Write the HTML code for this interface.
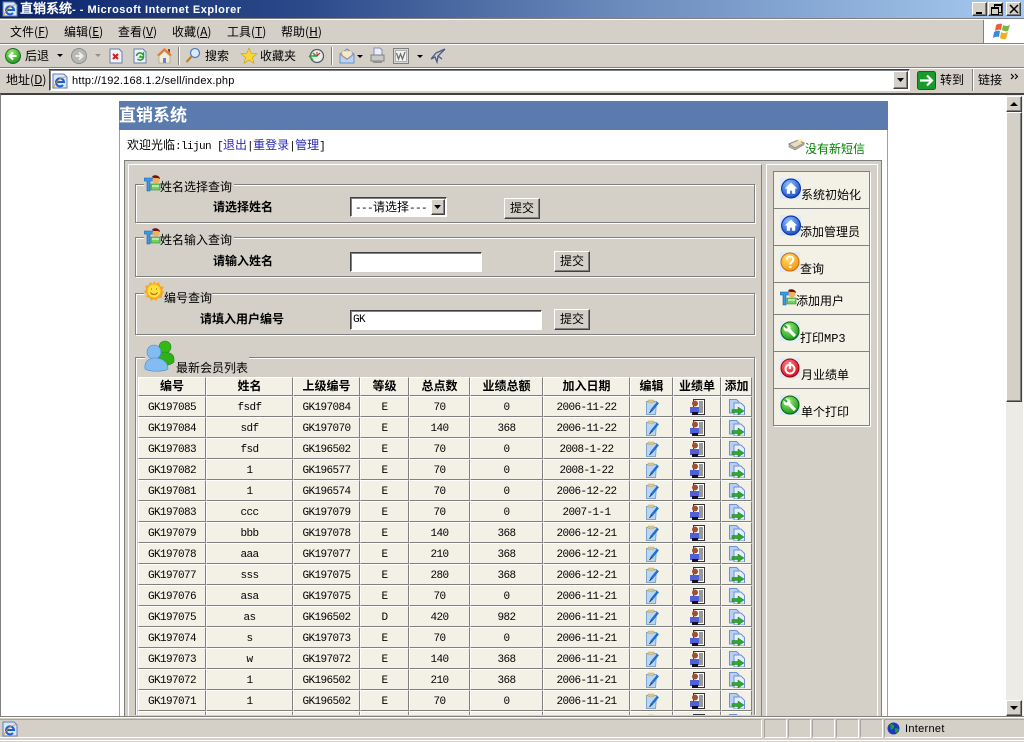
<!DOCTYPE html>
<html><head><meta charset="utf-8"><title>直销系统</title>
<style>
html,body{margin:0;padding:0;width:1024px;height:742px;overflow:hidden;background:#d4d0c8;font-family:"WenQuanYi Zen Hei","Noto Sans CJK SC","Liberation Sans",sans-serif;font-size:12px;color:#000}
.a{position:absolute}
.t{position:absolute;white-space:nowrap;line-height:14px;font-size:12px}
.l{font-family:"Liberation Sans","WenQuanYi Zen Hei",sans-serif;font-size:11px}
.m{font-family:"Liberation Mono","WenQuanYi Zen Hei",monospace;font-size:11px;letter-spacing:-.6px}
.btn3d{position:absolute;background:#d4d0c8;border:1px solid;border-color:#fff #404040 #404040 #fff;box-shadow:inset -1px -1px 0 #808080;box-sizing:border-box}
.sunk{position:absolute;background:#fff;border:1px solid;border-color:#404040 #fff #fff #404040;box-shadow:inset 1px 1px 0 #808080,0 0 0 0 #fff;box-sizing:border-box}
.fs{position:absolute;left:135px;width:620px;box-sizing:border-box;border:1px solid #808080;box-shadow:1px 1px 0 #fff,inset 1px 1px 0 #fff}
.leg{position:absolute;background:#d4d0c8;height:14px}
.st{position:absolute;top:719px;height:19px;box-sizing:border-box;border:1px solid;border-color:#a8a49c #fff #fff #a8a49c}
table{border-collapse:separate;border-spacing:0;table-layout:fixed}
#tb td,#tb th{background:#f3f1e6;border-style:solid;border-width:1px;border-color:#fff #808080 #808080 #fff;padding:0;text-align:center;overflow:hidden;white-space:nowrap;line-height:12px}
#tb td{font-family:"Liberation Mono","WenQuanYi Zen Hei",monospace;font-size:11px;letter-spacing:-.6px;height:17px;padding-top:2px}
#tb th{font-size:12px;font-weight:bold;height:16px;padding-bottom:1px}
#tb svg{display:block;margin:0 auto;position:relative;top:-1px}
svg{position:absolute;overflow:visible}
</style></head><body>
<svg width="0" height="0" style="position:absolute"><defs>
<radialGradient id="gb" cx=".4" cy=".3" r=".8"><stop offset="0" stop-color="#8fc4ff"/><stop offset="1" stop-color="#0b3fc0"/></radialGradient>
<radialGradient id="gg" cx=".4" cy=".3" r=".8"><stop offset="0" stop-color="#9cf070"/><stop offset="1" stop-color="#0a8a14"/></radialGradient>
<radialGradient id="gy" cx=".4" cy=".3" r=".8"><stop offset="0" stop-color="#ffe070"/><stop offset="1" stop-color="#f09000"/></radialGradient>
<radialGradient id="gr" cx=".4" cy=".3" r=".8"><stop offset="0" stop-color="#ff8080"/><stop offset="1" stop-color="#d00010"/></radialGradient>
<symbol id="edit" viewBox="0 0 16 16"><path d="M2.500 2.500h10l-1 13h-9z" fill="#bcd6f2" stroke="#7fa6cc"/><path d="M4 1h6v2.500H4z" fill="#d8c890" stroke="#b8a870" stroke-width=".5"/><path d="M14 3.500L7 12" stroke="#1c70d8" stroke-width="2.500"/><path d="M7.500 11.500L5.500 14" stroke="#123" stroke-width="1"/></symbol>
<symbol id="per" viewBox="0 0 16 16"><path d="M4.500 .5h11v15h-11z" fill="#fff" stroke="#333"/><path d="M10 3h4M10 5h4M10 7h4M10 9h4M10 11h4M10 13h4" stroke="#333"/><circle cx="6" cy="4.500" r="3" fill="#a05030"/><path d="M1 8h9v6H1z" fill="#5060d8"/><path d="M3 13h6v3H3z" fill="#112"/></symbol>
<symbol id="doc" viewBox="0 0 16 16"><path d="M.5.5h7l2.500 2.500v11H.5z" fill="#b8d0f4" stroke="#7090d0"/><path d="M5 4h7l3.500 3.500V16H5z" fill="#e6efff" stroke="#7090d0"/><path d="M3 10.500h6V8l6 4-6 4v-2.500H3z" fill="#30a830" stroke="#1a7a1a" stroke-width=".5"/></symbol>
<symbol id="home" viewBox="0 0 20 20"><rect width="20" height="20" fill="#dfe9f7"/><circle cx="10.500" cy="10" r="9" fill="url(#gb)" stroke="#0a2fa0"/><path d="M10.500 4.500l6 5.500h-2v5h-3v-3h-2v3h-3v-5h-2z" fill="#fff"/></symbol>
<symbol id="q" viewBox="0 0 20 20"><rect width="20" height="20" fill="#dfe9f7"/><circle cx="10" cy="10" r="9" fill="url(#gy)" stroke="#d06810"/><path d="M6.800 7.500c0-4 6.500-4 6.500 0 0 2.500-3 2.500-3 5" fill="none" stroke="#fff" stroke-width="2"/><rect x="9.200" y="14" width="2.200" height="2" fill="#fff"/></symbol>
<symbol id="wr" viewBox="0 0 20 20"><rect width="20" height="20" fill="#dfe9f7"/><circle cx="10" cy="10" r="9" fill="url(#gg)" stroke="#066010"/><circle cx="7" cy="7" r="3.500" fill="#fff"/><path d="M7 7l8 8" stroke="#fff" stroke-width="3.200"/><path d="M7 7L4.500 4.500" stroke="#2aa82a" stroke-width="2"/></symbol>
<symbol id="pw" viewBox="0 0 20 20"><rect width="20" height="20" fill="#dfe9f7"/><circle cx="10" cy="10" r="9" fill="url(#gr)" stroke="#a00010"/><circle cx="10" cy="11" r="4.500" fill="none" stroke="#fff" stroke-width="2"/><path d="M10 4v7" stroke="#fff" stroke-width="2.200"/></symbol>
<symbol id="tu" viewBox="0 0 17 17"><path d="M0 3h9v3H6v10H3V6H0z" fill="#3a9ae8" stroke="#1a5a9a" stroke-width=".6"/><circle cx="12" cy="5" r="3.500" fill="#f0b060"/><path d="M8 2c1-3 8-2 8 2l-2-1-4 0z" fill="#701010"/><path d="M7 9h9v6H7z" fill="#70d060" stroke="#208020" stroke-width=".6"/><path d="M8 11h7" stroke="#fff"/></symbol>
<symbol id="sun" viewBox="0 0 20 20"><path d="M10 0l2 3 3-2 1 4 4 1-2 3 2 2-2 3 0 3-4 0-2 3-2-2-3 2-1-3-4-1 1-3-3-2 2-3-1-3 4-1 1-3 3 2z" fill="#f8a818"/><circle cx="10" cy="10" r="6.500" fill="#ffe040"/><path d="M7 8h1M12 8h1M6.500 11.500c1.500 2.500 5.500 2.500 7 0" stroke="#a05800" fill="none"/></symbol>
<symbol id="ie" viewBox="0 0 16 16"><path d="M1 1h11l3 3v11H1z" fill="#dbe6f8" stroke="#5f7fb0"/><path d="M4 9h8a4 4 0 1 0-1 3" fill="none" stroke="#1d5fd0" stroke-width="2"/><path d="M2 14c2-6 7-10 12-10" fill="none" stroke="#e0a020" stroke-width=".8"/></symbol>
</defs></svg>

<!-- title bar -->
<div class="a" style="left:0;top:0;width:1024px;height:18px;background:linear-gradient(90deg,#0a246a 0,#2c4a8a 30%,#6a8abb 60%,#a6caf0 100%)"></div>
<svg style="left:2px;top:1px" width="16" height="16"><use href="#ie"/></svg>
<div class="t" style="left:20px;top:2px;color:#fff;font-weight:bold;font-family:'Liberation Sans','WenQuanYi Zen Hei',sans-serif;font-size:11px;letter-spacing:.5px"><span style="font-size:13px;letter-spacing:0">直销系统</span>- - Microsoft Internet Explorer</div>
<div class="btn3d" style="left:972px;top:2px;width:15px;height:14px"><div class="a" style="left:3px;top:9px;width:6px;height:2px;background:#000"></div></div>
<div class="btn3d" style="left:988px;top:2px;width:15px;height:14px"><div class="a" style="left:5px;top:1px;width:6px;height:6px;border:1px solid #000;border-top-width:2px"></div><div class="a" style="left:2px;top:4px;width:6px;height:5px;background:#d4d0c8;border:1px solid #000;border-top-width:2px"></div></div>
<div class="btn3d" style="left:1006px;top:2px;width:15px;height:14px"><svg style="left:2px;top:1px" width="10" height="10"><path d="M1 1l8 8M9 1l-8 8" stroke="#000" stroke-width="1.500"/></svg></div>

<!-- menu -->
<div class="a" style="left:0;top:18px;width:1024px;height:1px;background:#808080"></div>
<div class="a" style="left:0;top:19px;width:1024px;height:1px;background:#fff"></div>
<div class="a" style="left:0;top:43px;width:1024px;height:1px;background:#808080"></div>
<div class="a" style="left:0;top:44px;width:1024px;height:1px;background:#fff"></div>
<div class="t" style="left:10px;top:25px">文件(<u>F</u>)</div>
<div class="t" style="left:64px;top:25px">编辑(<u>E</u>)</div>
<div class="t" style="left:118px;top:25px">查看(<u>V</u>)</div>
<div class="t" style="left:172px;top:25px">收藏(<u>A</u>)</div>
<div class="t" style="left:227px;top:25px">工具(<u>T</u>)</div>
<div class="t" style="left:281px;top:25px">帮助(<u>H</u>)</div>
<div class="a" style="left:983px;top:20px;width:41px;height:23px;background:#fff;border-left:1px solid #808080;box-sizing:border-box"></div>
<svg style="left:993px;top:22px" width="20" height="20"><path d="M3 3q3-2 6-1l-1 6q-3-1-6 1z" fill="#e8603a"/><path d="M10 3q3 2 7 0l-2 6q-3 1-6-1z" fill="#78b840"/><path d="M1 10q3-2 6-1l-1 6q-3-1-6 1z" fill="#3a88d8"/><path d="M8 10q3 2 7 0l-2 7q-3 1-6-1z" fill="#f0b020"/></svg>

<!-- toolbar -->
<svg style="left:5px;top:48px" width="16" height="16"><circle cx="8" cy="8" r="7.500" fill="url(#gg)" stroke="#286a28"/><path d="M11.500 8H5M8 4.500L4.500 8 8 11.500" stroke="#fff" stroke-width="2" fill="none"/></svg>
<div class="t" style="left:25px;top:49px">后退</div>
<svg style="left:57px;top:54px" width="7" height="4"><path d="M0 0h6L3 3z" fill="#000"/></svg>
<svg style="left:71px;top:48px" width="16" height="16"><circle cx="8" cy="8" r="7.500" fill="#b8b8b4" stroke="#8c8c88"/><path d="M4.500 8H11M8 4.500L11.500 8 8 11.500" stroke="#eee" stroke-width="2" fill="none"/></svg>
<svg style="left:95px;top:54px" width="7" height="4"><path d="M0 0h6L3 3z" fill="#909090"/></svg>
<svg style="left:109px;top:48px" width="14" height="16"><path d="M1 1h9l3 3v11H1z" fill="#eef2fb" stroke="#6a7fa8"/><path d="M4 6l5 5M9 6l-5 5" stroke="#e01818" stroke-width="2"/></svg>
<svg style="left:133px;top:48px" width="14" height="16"><path d="M1 1h9l3 3v11H1z" fill="#eef2fb" stroke="#6a7fa8"/><path d="M3.500 8a3.500 3.500 0 0 1 6-2l1-1v4H7l1.200-1.200M10.500 9a3.500 3.500 0 0 1-6 2" fill="none" stroke="#28a028" stroke-width="1.500"/></svg>
<svg style="left:156px;top:47px" width="17" height="17"><path d="M8.500 1L1 8l1.500 1L8.500 3.500 14.500 9 16 8z" fill="#e8782c"/><path d="M3 9l5.500-5L14 9v7H3z" fill="#f4ecd8" stroke="#a09070" stroke-width=".6"/><path d="M7 11h3v5H7z" fill="#5a88d0"/><path d="M12 2h2v4l-2-2z" fill="#a04020"/></svg>
<div class="a" style="left:178px;top:47px;width:1px;height:18px;background:#808080;box-shadow:1px 0 0 #fff"></div>
<svg style="left:185px;top:47px" width="16" height="17"><circle cx="10" cy="6" r="4.500" fill="#dcebff" stroke="#5080c0" stroke-width="1.300"/><path d="M6.500 9.500L1.500 15" stroke="#c08030" stroke-width="2.200"/></svg>
<div class="t" style="left:205px;top:49px">搜索</div>
<svg style="left:241px;top:48px" width="16" height="16"><path d="M8 0l2.200 5.400 5.800.4-4.500 3.700 1.500 5.700L8 12.100 3 15.200l1.500-5.700L0 5.800l5.800-.4z" fill="#f8d838" stroke="#c89818" stroke-width=".6"/></svg>
<div class="t" style="left:260px;top:49px">收藏夹</div>
<svg style="left:308px;top:48px" width="16" height="16"><circle cx="9" cy="8" r="6.500" fill="#e8ecec" stroke="#506060" stroke-width="1.300"/><path d="M9 8l3-3M9 8V4" stroke="#c02020"/><path d="M1 8h7l-3-3M1 8l4 4" stroke="#30a030" stroke-width="1.500" fill="none"/></svg>
<div class="a" style="left:331px;top:47px;width:1px;height:18px;background:#808080;box-shadow:1px 0 0 #fff"></div>
<svg style="left:339px;top:48px" width="16" height="16"><path d="M1 6l7-5 7 5v9H1z" fill="#bcd4f4" stroke="#6a90c8"/><path d="M3 3h10v6l-5 3-5-3z" fill="#f8e8c8" stroke="#d8a880" stroke-width=".6"/><path d="M1 6l7 5 7-5" fill="none" stroke="#6a90c8"/></svg>
<svg style="left:357px;top:55px" width="7" height="4"><path d="M0 0h6L3 3z" fill="#000"/></svg>
<svg style="left:370px;top:47px" width="15" height="17"><path d="M4 1h6l2 2v5H4z" fill="#eef" stroke="#8090a8"/><path d="M1 8h13v6H1z" fill="#c8c8c4" stroke="#808080"/><path d="M3 14h9v2H3z" fill="#909090"/></svg>
<svg style="left:393px;top:48px" width="16" height="16"><path d="M.5.5h15v15H.5z" fill="#d8d8d4" stroke="#808080"/><path d="M2.500 2.500h11v11h-11z" fill="#f4f4f0" stroke="#b0b0b0"/><path d="M3.500 5l2 6 2-5 2 5 2.500-7" fill="none" stroke="#707070" stroke-width="1.300"/></svg>
<svg style="left:417px;top:55px" width="7" height="4"><path d="M0 0h6L3 3z" fill="#000"/></svg>
<svg style="left:430px;top:48px" width="16" height="16"><path d="M15 1L6 5 1 11l4-2 2 5 1-6 7-7M8 8l4 3" fill="none" stroke="#4a5a8a" stroke-width="1.300"/></svg>

<!-- address -->
<div class="a" style="left:0;top:67px;width:1024px;height:1px;background:#808080"></div>
<div class="a" style="left:0;top:68px;width:1024px;height:1px;background:#fff"></div>
<div class="t" style="left:6px;top:73px">地址(<u>D</u>)</div>
<div class="sunk" style="left:49px;top:69px;width:861px;height:22px"></div>
<svg style="left:52px;top:73px" width="16" height="16"><use href="#ie"/></svg>
<div class="t l" style="left:72px;top:74px;font-size:11px;letter-spacing:.2px">http://192.168.1.2/sell/index.php</div>
<div class="btn3d" style="left:893px;top:71px;width:15px;height:18px"><svg style="left:3px;top:6px" width="8" height="5"><path d="M0 0h7L3.500 4z" fill="#000"/></svg></div>
<svg style="left:917px;top:71px" width="19" height="19"><rect x=".5" y=".5" width="18" height="18" rx="2" fill="#1a9a2a" stroke="#0a6a18"/><path d="M3 9.500h11M10 4.500l5 5-5 5" stroke="#fff" stroke-width="2.200" fill="none"/></svg>
<div class="t" style="left:940px;top:73px">转到</div>
<div class="a" style="left:972px;top:69px;width:1px;height:22px;background:#808080;box-shadow:1px 0 0 #fff"></div>
<div class="t" style="left:978px;top:73px">链接</div>
<svg style="left:1010px;top:73px" width="9" height="7"><path d="M1 1l2.500 2.500L1 6M5 1l2.500 2.500L5 6" fill="none" stroke="#000" stroke-width="1.100"/></svg>

<!-- viewport -->
<div class="a" style="left:0;top:93px;width:1024px;height:624px;background:#fff;border-top:2px solid #404040;border-left:1px solid #808080;box-sizing:border-box"></div>

<!-- page -->
<div class="a" style="left:119px;top:101px;width:769px;height:29px;background:#5b7aad"></div>
<div class="t" style="left:119px;top:104px;color:#fff;font-size:17px;line-height:20px;font-weight:bold">直销系统</div>
<div class="a" style="left:119px;top:130px;width:1px;height:587px;background:#a0a0a0"></div>
<div class="a" style="left:887px;top:130px;width:1px;height:587px;background:#a0a0a0"></div>
<div class="t" style="left:127px;top:138px">欢迎光临<span class="m">:lijun [</span><span style="color:#2a2ab8">退出</span><span class="m">|</span><span style="color:#2a2ab8">重登录</span><span class="m">|</span><span style="color:#2a2ab8">管理</span><span class="m">]</span></div>
<svg style="left:788px;top:137px" width="17" height="16"><path d="M1 7l9-4 6 3-9 5z" fill="#e8dcc0" stroke="#888"/><path d="M1 7v3l6 3 9-5V6l-9 5z" fill="#b8b0a0" stroke="#888" stroke-width=".6"/><path d="M12 0l1 2 2 1-2 1-1 2-1-2-2-1 2-1z" fill="#fff8a0"/></svg>
<div class="t" style="left:805px;top:142px;color:#008000">没有新短信</div>

<!-- main panel -->
<div class="a" style="left:124px;top:160px;width:758px;height:557px;background:#d4d0c8;border:1px solid #808080;border-bottom:0;box-sizing:border-box"></div>
<div class="a" style="left:128px;top:164px;width:634px;height:553px;border:1px solid #fff;border-bottom:0;border-right:1px solid #808080;box-sizing:border-box"></div>
<div class="a" style="left:766px;top:164px;width:112px;height:553px;border:1px solid #fff;border-bottom:0;box-sizing:border-box;box-shadow:0 0 0 0 #000"></div>
<div class="a" style="left:763px;top:164px;width:3px;height:553px;background:#d4d0c8"></div>
<div class="a" style="left:878px;top:164px;width:3px;height:553px;background:#d4d0c8"></div>

<!-- fieldset 1 -->
<div class="fs" style="top:184px;height:39px"></div>
<div class="leg" style="left:144px;top:178px;width:90px"></div>
<svg style="left:144px;top:175px" width="17" height="17"><use href="#tu"/></svg>
<div class="t" style="left:160px;top:180px">姓名选择查询</div>
<div class="t" style="left:213px;top:200px;font-weight:bold">请选择姓名</div>
<div class="sunk" style="left:350px;top:197px;width:97px;height:20px"></div>
<div class="t" style="left:355px;top:200px"><span class="m">---</span>请选择<span class="m">---</span></div>
<div class="btn3d" style="left:431px;top:199px;width:14px;height:16px"><svg style="left:2px;top:5px" width="8" height="5"><path d="M0 0h7L3.500 4z" fill="#000"/></svg></div>
<div class="btn3d" style="left:504px;top:198px;width:36px;height:21px"><div class="t" style="left:5px;top:2px">提交</div></div>

<!-- fieldset 2 -->
<div class="fs" style="top:237px;height:40px"></div>
<div class="leg" style="left:144px;top:231px;width:90px"></div>
<svg style="left:144px;top:228px" width="17" height="17"><use href="#tu"/></svg>
<div class="t" style="left:160px;top:233px">姓名输入查询</div>
<div class="t" style="left:213px;top:254px;font-weight:bold">请输入姓名</div>
<div class="sunk" style="left:350px;top:252px;width:132px;height:20px"></div>
<div class="btn3d" style="left:554px;top:251px;width:36px;height:21px"><div class="t" style="left:5px;top:2px">提交</div></div>

<!-- fieldset 3 -->
<div class="fs" style="top:293px;height:42px"></div>
<div class="leg" style="left:144px;top:287px;width:68px"></div>
<svg style="left:144px;top:281px" width="20" height="20"><use href="#sun"/></svg>
<div class="t" style="left:164px;top:291px">编号查询</div>
<div class="t" style="left:200px;top:312px;font-weight:bold">请填入用户编号</div>
<div class="sunk" style="left:350px;top:310px;width:192px;height:20px"></div>
<div class="t m" style="left:353px;top:313px">GK</div>
<div class="btn3d" style="left:554px;top:309px;width:36px;height:21px"><div class="t" style="left:5px;top:2px">提交</div></div>

<!-- fieldset 4 -->
<div class="fs" style="top:357px;height:370px;clip-path:inset(-2px -2px 12px -2px)"></div>
<div class="leg" style="left:145px;top:351px;width:104px"></div>
<svg style="left:145px;top:340px" width="32" height="33"><circle cx="20" cy="7" r="6" fill="#38b818" stroke="#1a8a10" stroke-width=".6"/><path d="M12 25V18c0-4 4-6 8-6s9 2 9 7v3c-4 4-12 4-17 3z" fill="#30b018" stroke="#1a8a10" stroke-width=".6"/><circle cx="9" cy="12" r="7" fill="#82bcf0" stroke="#4a88d0" stroke-width=".6"/><path d="M0 29c-1-8 4-11 10-11s13 3 13 11c-4 3-18 3-23 0z" fill="#82bcf0" stroke="#4a88d0" stroke-width=".6"/></svg>
<div class="t" style="left:176px;top:361px">最新会员列表</div>

<div class="a" style="left:138px;top:377px;width:615px;height:338px;overflow:hidden">
<table id="tb" style="width:614px">
<colgroup><col style="width:68px"><col style="width:87px"><col style="width:67px"><col style="width:49px"><col style="width:61px"><col style="width:73px"><col style="width:87px"><col style="width:43px"><col style="width:48px"><col style="width:31px"></colgroup>
<tr><th>编号</th><th>姓名</th><th>上级编号</th><th>等级</th><th>总点数</th><th>业绩总额</th><th>加入日期</th><th>编辑</th><th>业绩单</th><th>添加</th></tr>
<tr><td>GK197085</td><td>fsdf</td><td>GK197084</td><td>E</td><td>70</td><td>0</td><td>2006-11-22</td><td><svg width="16" height="16"><use href="#edit"/></svg></td><td><svg width="16" height="16"><use href="#per"/></svg></td><td><svg width="16" height="16"><use href="#doc"/></svg></td></tr>
<tr><td>GK197084</td><td>sdf</td><td>GK197070</td><td>E</td><td>140</td><td>368</td><td>2006-11-22</td><td><svg width="16" height="16"><use href="#edit"/></svg></td><td><svg width="16" height="16"><use href="#per"/></svg></td><td><svg width="16" height="16"><use href="#doc"/></svg></td></tr>
<tr><td>GK197083</td><td>fsd</td><td>GK196502</td><td>E</td><td>70</td><td>0</td><td>2008-1-22</td><td><svg width="16" height="16"><use href="#edit"/></svg></td><td><svg width="16" height="16"><use href="#per"/></svg></td><td><svg width="16" height="16"><use href="#doc"/></svg></td></tr>
<tr><td>GK197082</td><td>1</td><td>GK196577</td><td>E</td><td>70</td><td>0</td><td>2008-1-22</td><td><svg width="16" height="16"><use href="#edit"/></svg></td><td><svg width="16" height="16"><use href="#per"/></svg></td><td><svg width="16" height="16"><use href="#doc"/></svg></td></tr>
<tr><td>GK197081</td><td>1</td><td>GK196574</td><td>E</td><td>70</td><td>0</td><td>2006-12-22</td><td><svg width="16" height="16"><use href="#edit"/></svg></td><td><svg width="16" height="16"><use href="#per"/></svg></td><td><svg width="16" height="16"><use href="#doc"/></svg></td></tr>
<tr><td>GK197083</td><td>ccc</td><td>GK197079</td><td>E</td><td>70</td><td>0</td><td>2007-1-1</td><td><svg width="16" height="16"><use href="#edit"/></svg></td><td><svg width="16" height="16"><use href="#per"/></svg></td><td><svg width="16" height="16"><use href="#doc"/></svg></td></tr>
<tr><td>GK197079</td><td>bbb</td><td>GK197078</td><td>E</td><td>140</td><td>368</td><td>2006-12-21</td><td><svg width="16" height="16"><use href="#edit"/></svg></td><td><svg width="16" height="16"><use href="#per"/></svg></td><td><svg width="16" height="16"><use href="#doc"/></svg></td></tr>
<tr><td>GK197078</td><td>aaa</td><td>GK197077</td><td>E</td><td>210</td><td>368</td><td>2006-12-21</td><td><svg width="16" height="16"><use href="#edit"/></svg></td><td><svg width="16" height="16"><use href="#per"/></svg></td><td><svg width="16" height="16"><use href="#doc"/></svg></td></tr>
<tr><td>GK197077</td><td>sss</td><td>GK197075</td><td>E</td><td>280</td><td>368</td><td>2006-12-21</td><td><svg width="16" height="16"><use href="#edit"/></svg></td><td><svg width="16" height="16"><use href="#per"/></svg></td><td><svg width="16" height="16"><use href="#doc"/></svg></td></tr>
<tr><td>GK197076</td><td>asa</td><td>GK197075</td><td>E</td><td>70</td><td>0</td><td>2006-11-21</td><td><svg width="16" height="16"><use href="#edit"/></svg></td><td><svg width="16" height="16"><use href="#per"/></svg></td><td><svg width="16" height="16"><use href="#doc"/></svg></td></tr>
<tr><td>GK197075</td><td>as</td><td>GK196502</td><td>D</td><td>420</td><td>982</td><td>2006-11-21</td><td><svg width="16" height="16"><use href="#edit"/></svg></td><td><svg width="16" height="16"><use href="#per"/></svg></td><td><svg width="16" height="16"><use href="#doc"/></svg></td></tr>
<tr><td>GK197074</td><td>s</td><td>GK197073</td><td>E</td><td>70</td><td>0</td><td>2006-11-21</td><td><svg width="16" height="16"><use href="#edit"/></svg></td><td><svg width="16" height="16"><use href="#per"/></svg></td><td><svg width="16" height="16"><use href="#doc"/></svg></td></tr>
<tr><td>GK197073</td><td>w</td><td>GK197072</td><td>E</td><td>140</td><td>368</td><td>2006-11-21</td><td><svg width="16" height="16"><use href="#edit"/></svg></td><td><svg width="16" height="16"><use href="#per"/></svg></td><td><svg width="16" height="16"><use href="#doc"/></svg></td></tr>
<tr><td>GK197072</td><td>1</td><td>GK196502</td><td>E</td><td>210</td><td>368</td><td>2006-11-21</td><td><svg width="16" height="16"><use href="#edit"/></svg></td><td><svg width="16" height="16"><use href="#per"/></svg></td><td><svg width="16" height="16"><use href="#doc"/></svg></td></tr>
<tr><td>GK197071</td><td>1</td><td>GK196502</td><td>E</td><td>70</td><td>0</td><td>2006-11-21</td><td><svg width="16" height="16"><use href="#edit"/></svg></td><td><svg width="16" height="16"><use href="#per"/></svg></td><td><svg width="16" height="16"><use href="#doc"/></svg></td></tr>
<tr><td></td><td></td><td></td><td></td><td></td><td></td><td></td><td><svg width="16" height="16"><use href="#edit"/></svg></td><td><svg width="16" height="16"><use href="#per"/></svg></td><td><svg width="16" height="16"><use href="#doc"/></svg></td></tr>
</table>
</div>

<!-- right menu -->
<div class="a" style="left:773px;top:171px;width:97px;height:255px;background:#f3f1e6;border:1px solid #808080;box-shadow:1px 1px 0 #fff;box-sizing:border-box"></div>
<div class="a" style="left:774px;top:208px;width:95px;height:1px;background:#808080"></div>
<div class="a" style="left:774px;top:245px;width:95px;height:1px;background:#808080"></div>
<div class="a" style="left:774px;top:282px;width:95px;height:1px;background:#808080"></div>
<div class="a" style="left:774px;top:314px;width:95px;height:1px;background:#808080"></div>
<div class="a" style="left:774px;top:351px;width:95px;height:1px;background:#808080"></div>
<div class="a" style="left:774px;top:388px;width:95px;height:1px;background:#808080"></div>
<svg style="left:780px;top:178px" width="21" height="21"><use href="#home"/></svg>
<div class="t" style="left:801px;top:188px">系统初始化</div>
<svg style="left:780px;top:215px" width="21" height="21"><use href="#home"/></svg>
<div class="t" style="left:800px;top:225px">添加管理员</div>
<svg style="left:780px;top:252px" width="20" height="20"><use href="#q"/></svg>
<div class="t" style="left:800px;top:262px">查询</div>
<svg style="left:780px;top:289px" width="17" height="17"><use href="#tu"/></svg>
<div class="t" style="left:796px;top:294px">添加用户</div>
<svg style="left:780px;top:321px" width="20" height="20"><use href="#wr"/></svg>
<div class="t" style="left:800px;top:331px">打印<span class="m" style="font-size:12px;letter-spacing:0">MP3</span></div>
<svg style="left:780px;top:358px" width="20" height="20"><use href="#pw"/></svg>
<div class="t" style="left:801px;top:368px">月业绩单</div>
<svg style="left:780px;top:395px" width="20" height="20"><use href="#wr"/></svg>
<div class="t" style="left:801px;top:405px">单个打印</div>

<!-- scrollbar -->
<div class="a" style="left:1006px;top:95px;width:17px;height:622px;background:#ecebe6"></div>
<div class="btn3d" style="left:1006px;top:96px;width:16px;height:16px"><svg style="left:3px;top:5px" width="9" height="5"><path d="M4 0l4 4H0z" fill="#000"/></svg></div>
<div class="btn3d" style="left:1006px;top:112px;width:16px;height:290px"></div>
<div class="btn3d" style="left:1006px;top:700px;width:16px;height:16px"><svg style="left:3px;top:5px" width="9" height="5"><path d="M0 0h8L4 4z" fill="#000"/></svg></div>

<!-- status -->
<div class="a" style="left:0;top:716px;width:1024px;height:1px;background:#808080"></div>
<div class="a" style="left:0;top:717px;width:1024px;height:1px;background:#fff"></div>
<div class="a" style="left:0;top:718px;width:1024px;height:24px;background:#d4d0c8"></div>
<div class="a" style="left:0;top:740px;width:1024px;height:1px;background:#fff"></div>
<div class="st" style="left:0;width:762px;border-left:0"></div>
<div class="st" style="left:764px;width:23px"></div>
<div class="st" style="left:788px;width:23px"></div>
<div class="st" style="left:812px;width:23px"></div>
<div class="st" style="left:836px;width:23px"></div>
<div class="st" style="left:860px;width:23px"></div>
<div class="st" style="left:884px;width:140px;border-right:0"></div>
<svg style="left:2px;top:721px" width="16" height="16"><use href="#ie"/></svg>
<svg style="left:887px;top:722px" width="13" height="13"><circle cx="6.500" cy="6.500" r="6" fill="#1a3ac0"/><path d="M3 2l4 1 0 3-3 2zM8 6l4 1-2 4-2-1z" fill="#20a020"/></svg>
<div class="t l" style="left:905px;top:722px;letter-spacing:.3px">Internet</div>
</body></html>
